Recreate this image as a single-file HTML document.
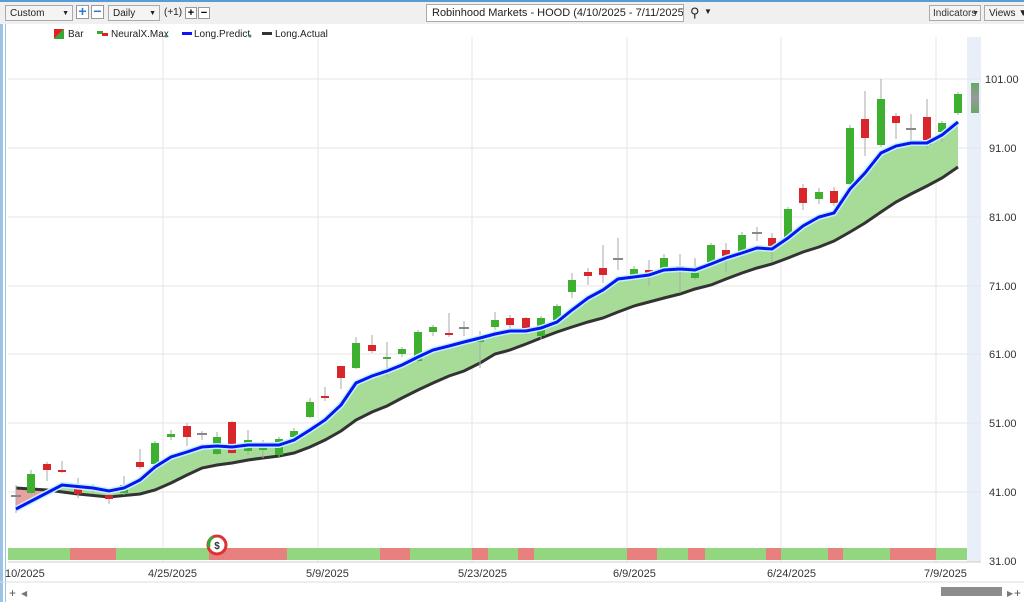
<!DOCTYPE html>
<html><head><meta charset="utf-8"><style>
body{margin:0;width:1024px;height:602px;overflow:hidden;background:#fff;font-family:"Liberation Sans",sans-serif;position:relative}
.tb{position:absolute;left:0;top:0;width:1024px;height:24px;background:#f0f0f0;border-top:2px solid #5b9bd5;box-sizing:border-box}
.dd{position:absolute;top:3px;height:16px;border:1px solid #aaa;background:#f4f4f4;font-size:10px;line-height:15px;padding-left:4px;box-sizing:border-box;color:#222;white-space:nowrap;overflow:hidden}
.ar{position:absolute;right:3px;top:0;font-size:7px}
.btn{position:absolute;top:5px;width:12px;height:12px;border:1px solid #999;background:#fff;box-sizing:border-box;font-size:11px;line-height:10px;text-align:center;font-weight:bold}
.t{position:absolute;font-size:10px;color:#222;white-space:nowrap}
</style></head><body>
<div class="tb">
<div class="dd" style="left:5px;width:68px">Custom<span class="ar">▼</span></div>
<div class="btn" style="left:76px;color:#2a7ad5;width:13px;height:14px;top:3px;font-size:14px">+</div>
<div class="btn" style="left:91px;color:#2a7ad5;width:13px;height:14px;top:3px;font-size:14px">−</div>
<div class="dd" style="left:108px;width:52px">Daily<span class="ar">▼</span></div>
<div class="t" style="left:164px;top:5px">(+1)</div>
<div class="btn" style="left:185px">+</div>
<div class="btn" style="left:198px">−</div>
<div class="dd" style="left:426px;width:258px;height:18px;top:2px;background:#fff;font-size:11px;line-height:17px;padding-left:5px">Robinhood Markets - HOOD (4/10/2025 - 7/11/2025)</div>
<div class="t" style="left:690px;top:3px;font-size:13px">&#9906;</div>
<div class="t" style="left:704px;top:5px;font-size:8px">▼</div>
<div class="dd" style="left:929px;width:52px;color:#333;padding-left:3px">Indicators<span style="position:absolute;right:1px;font-size:7px">▼</span></div>
<div class="dd" style="left:984px;width:42px">Views ▼</div>
</div>
<svg width="1024" height="602" style="position:absolute;left:0;top:0" xmlns="http://www.w3.org/2000/svg">
<rect x="0" y="24" width="3" height="578" fill="#9cc3e5"/><rect x="5" y="24" width="1" height="578" fill="#9cc3e5"/>
<rect x="967" y="37" width="14" height="525" fill="#e8eff8"/>
<g stroke="#e6e6e6" stroke-width="1">
<line x1="8" y1="79" x2="981" y2="79"/><line x1="8" y1="148" x2="981" y2="148"/><line x1="8" y1="217" x2="981" y2="217"/><line x1="8" y1="286" x2="981" y2="286"/><line x1="8" y1="354" x2="981" y2="354"/><line x1="8" y1="423" x2="981" y2="423"/><line x1="8" y1="492" x2="981" y2="492"/>
<line x1="163" y1="37" x2="163" y2="562"/><line x1="318" y1="37" x2="318" y2="562"/><line x1="472" y1="37" x2="472" y2="562"/><line x1="627" y1="37" x2="627" y2="562"/><line x1="781" y1="37" x2="781" y2="562"/><line x1="936" y1="37" x2="936" y2="562"/>
</g>
<line x1="8" y1="562" x2="981" y2="562" stroke="#ccc"/>
<line x1="0" y1="582" x2="1024" y2="582" stroke="#ddd"/>
<polygon fill="#e8a0a0" points="16,488 47,490 62,485 16,509"/>
<polygon fill="#a6dc98" points="47,490 62,485 93,488 109,491 124,488 140,480 155,467 171,457 187,452 202,447 217,446 232,447 248,445 263,445 279,445 294,440 310,430 325,420 341,405 356,383 372,376 387,371 402,365 418,357 433,350 449,346 464,342 480,338 495,334 510,331 526,331 541,328 557,322 572,310 588,298 603,290 618,279 634,277 649,275 664,270 680,269 695,270 711,264 726,258 742,253 757,248 772,249 788,238 803,226 819,217 834,213 850,189 865,173 881,153 896,146 911,143 927,143 942,135 958,122 958,167 942,178 927,186 911,194 896,202 881,212 865,223 850,232 834,241 819,247 803,252 788,258 772,264 757,268 742,273 726,279 711,285 695,289 680,294 664,298 649,302 634,306 618,312 603,318 588,322 572,327 557,332 541,338 526,344 510,350 495,354 480,363 464,371 449,376 433,383 418,390 402,398 387,406 372,412 356,420 341,431 325,440 310,447 294,453 279,456 263,458 248,460 232,463 217,465 202,468 187,475 171,483 155,490 140,494 109,497 78,494"/>
<polyline fill="none" stroke="#333" stroke-width="3" points="16,488 47,490 78,494 109,497 140,494 155,490 171,483 187,475 202,468 217,465 232,463 248,460 263,458 279,456 294,453 310,447 325,440 341,431 356,420 372,412 387,406 402,398 418,390 433,383 449,376 464,371 480,363 495,354 510,350 526,344 541,338 557,332 572,327 588,322 603,318 618,312 634,306 649,302 664,298 680,294 695,289 711,285 726,279 742,273 757,268 772,264 788,258 803,252 819,247 834,241 850,232 865,223 881,212 896,202 911,194 927,186 942,178 958,167"/>
<g id="c"></g>
<polyline fill="none" stroke="#bff4ff" stroke-width="6" points="16,509 62,485 93,488 109,491 124,488 140,480 155,467 171,457 187,452 202,447 217,446 232,447 248,445 263,445 279,445 294,440 310,430 325,420 341,405 356,383 372,376 387,371 402,365 418,357 433,350 449,346 464,342 480,338 495,334 510,331 526,331 541,328 557,322 572,310 588,298 603,290 618,279 634,277 649,275 664,270 680,269 695,270 711,264 726,258 742,253 757,248 772,249 788,238 803,226 819,217 834,213 850,189 865,173 881,153 896,146 911,143 927,143 942,135 958,122"/>
<polyline fill="none" stroke="#0a14f0" stroke-width="3" points="16,509 62,485 93,488 109,491 124,488 140,480 155,467 171,457 187,452 202,447 217,446 232,447 248,445 263,445 279,445 294,440 310,430 325,420 341,405 356,383 372,376 387,371 402,365 418,357 433,350 449,346 464,342 480,338 495,334 510,331 526,331 541,328 557,322 572,310 588,298 603,290 618,279 634,277 649,275 664,270 680,269 695,270 711,264 726,258 742,253 757,248 772,249 788,238 803,226 819,217 834,213 850,189 865,173 881,153 896,146 911,143 927,143 942,135 958,122"/>
<g>
<rect x="8" y="548" width="62" height="12" fill="#92d67f"/><rect x="70" y="548" width="46" height="12" fill="#e88080"/><rect x="116" y="548" width="93" height="12" fill="#92d67f"/><rect x="209" y="548" width="78" height="12" fill="#e88080"/><rect x="287" y="548" width="93" height="12" fill="#92d67f"/><rect x="380" y="548" width="30" height="12" fill="#e88080"/><rect x="410" y="548" width="62" height="12" fill="#92d67f"/><rect x="472" y="548" width="16" height="12" fill="#e88080"/><rect x="488" y="548" width="30" height="12" fill="#92d67f"/><rect x="518" y="548" width="16" height="12" fill="#e88080"/><rect x="534" y="548" width="93" height="12" fill="#92d67f"/><rect x="627" y="548" width="30" height="12" fill="#e88080"/><rect x="657" y="548" width="31" height="12" fill="#92d67f"/><rect x="688" y="548" width="17" height="12" fill="#e88080"/><rect x="705" y="548" width="61" height="12" fill="#92d67f"/><rect x="766" y="548" width="15" height="12" fill="#e88080"/><rect x="781" y="548" width="47" height="12" fill="#92d67f"/><rect x="828" y="548" width="15" height="12" fill="#e88080"/><rect x="843" y="548" width="47" height="12" fill="#92d67f"/><rect x="890" y="548" width="46" height="12" fill="#e88080"/><rect x="936" y="548" width="31" height="12" fill="#92d67f"/>
</g>
<circle cx="217" cy="545" r="9" fill="#fff" stroke="#d33" stroke-width="3"/>
<path d="M209,547 A9,9 0 0 1 213,537" stroke="#3a3" stroke-width="3" fill="none"/>
<text x="217" y="549" font-size="10" font-weight="bold" text-anchor="middle" fill="#333" font-family="Liberation Sans">$</text>
<g font-family="Liberation Sans" font-size="11" fill="#333">
<text x="985" y="83">101.00</text><text x="989" y="152">91.00</text><text x="989" y="221">81.00</text><text x="989" y="290">71.00</text><text x="989" y="358">61.00</text><text x="989" y="427">51.00</text><text x="989" y="496">41.00</text><text x="989" y="565">31.00</text>
<text x="5" y="577">10/2025</text><text x="148" y="577">4/25/2025</text><text x="306" y="577">5/9/2025</text><text x="458" y="577">5/23/2025</text><text x="613" y="577">6/9/2025</text><text x="767" y="577">6/24/2025</text><text x="924" y="577">7/9/2025</text>
</g>
<text x="9" y="597" font-size="12" fill="#555" font-family="Liberation Sans">+</text>
<text x="21" y="596" font-size="8" fill="#777">◀</text>
<rect x="941" y="587" width="61" height="9" fill="#8c8c8c"/>
<text x="1007" y="596" font-size="8" fill="#777">▶</text>
<text x="1014" y="597" font-size="12" fill="#555" font-family="Liberation Sans">+</text>
<polygon points="54,29 64,29 54,39" fill="#d22"/><polygon points="64,29 64,39 54,39" fill="#3a3"/>
<text x="68" y="37" font-size="10" fill="#222" font-family="Liberation Sans">Bar</text>
<rect x="97" y="31" width="6" height="3" fill="#3a3"/><rect x="102" y="33" width="6" height="3" fill="#d22"/>
<text x="111" y="37" font-size="10" fill="#222" font-family="Liberation Sans">NeuralX.Max</text><circle cx="166" cy="36" r="1.5" fill="#488"/>
<rect x="182" y="32" width="10" height="3" fill="#11f"/>
<text x="194" y="37" font-size="10" fill="#222" font-family="Liberation Sans">Long.Predict</text><circle cx="250" cy="36" r="1.5" fill="#488"/>
<rect x="262" y="32" width="10" height="3" fill="#333"/>
<text x="275" y="37" font-size="10" fill="#222" font-family="Liberation Sans">Long.Actual</text>
<defs><linearGradient id="gg" x1="0" y1="0" x2="0" y2="1"><stop offset="0" stop-color="#6a6"/><stop offset="0.5" stop-color="#999"/><stop offset="1" stop-color="#6a6"/></linearGradient></defs>
<rect x="971" y="83" width="8" height="30" fill="url(#gg)"/>
</svg>
<script>
var C=[[16,'d',496,496,485,513],[31,'g',474,493,470,495],[47,'r',464,470,462,481],[62,'r',470,471,461,473],[78,'r',487,494,478,498],[93,'d',489,489,484,494],[109,'r',495,499,489,504],[124,'g',485,493,476,495],[140,'r',462,467,449,469],[155,'g',443,464,441,466],[171,'g',434,437,430,440],[187,'r',426,437,423,446],[202,'d',434,434,431,440],[217,'g',437,454,432,455],[232,'r',422,453,421,454],[248,'g',440,451,430,455],[263,'g',444,450,440,458],[279,'g',439,455,437,457],[294,'g',431,437,428,439],[310,'g',402,417,398,418],[325,'r',396,398,387,401],[341,'r',366,378,366,389],[356,'g',343,368,337,369],[372,'r',345,351,335,353],[387,'g',357,359,342,377],[402,'g',349,354,347,357],[418,'g',332,361,330,362],[433,'g',327,332,325,336],[449,'r',333,334,313,337],[464,'d',328,328,321,336],[480,'g',340,341,331,368],[495,'g',320,327,312,330],[510,'r',318,325,315,328],[526,'r',318,333,317,335],[541,'g',318,336,316,340],[557,'g',306,320,304,322],[572,'g',280,292,273,298],[588,'r',272,276,268,285],[603,'r',268,275,245,283],[618,'d',259,259,238,270],[634,'g',269,277,266,279],[649,'r',270,275,260,286],[664,'g',258,271,254,273],[680,'g',266,267,254,293],[695,'g',273,278,258,280],[711,'g',245,265,243,267],[726,'r',250,257,243,272],[742,'g',235,253,232,257],[757,'d',233,233,227,241],[772,'r',238,248,233,262],[788,'g',209,237,207,239],[803,'r',188,203,184,210],[819,'g',192,199,188,204],[834,'r',191,203,187,206],[850,'g',128,184,125,186],[865,'r',119,138,91,156],[881,'g',99,145,79,147],[896,'r',116,123,113,139],[911,'d',129,129,114,145],[927,'r',117,145,99,148],[942,'g',123,132,121,142],[958,'g',94,113,92,115]];
var s='',col={g:'#3db030',r:'#d8262a',d:'#888'};
C.forEach(function(c){var x=c[0];s+='<line x1="'+x+'" x2="'+x+'" y1="'+c[4]+'" y2="'+c[5]+'" stroke="#aaa"/>';
if(c[1]=='d')s+='<rect x="'+(x-5)+'" y="'+(c[2]-1)+'" width="10" height="2" fill="#888"/>';
else s+='<rect x="'+(x-4)+'" y="'+c[2]+'" width="8" height="'+Math.max(2,c[3]-c[2])+'" fill="'+col[c[1]]+'"/>';});
document.getElementById('c').innerHTML=s;
</script>
</body></html>
